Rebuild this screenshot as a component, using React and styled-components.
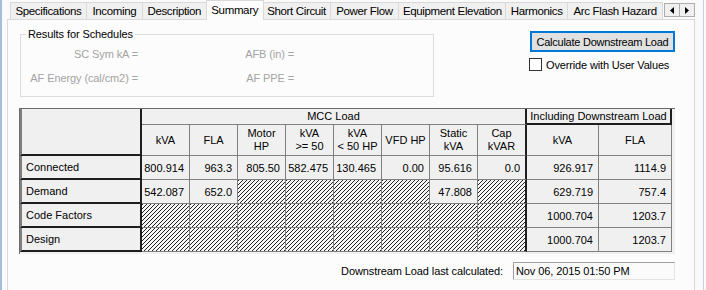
import React from 'react';
import styled, { createGlobalStyle, css } from 'styled-components';

const GlobalStyle = createGlobalStyle`
  html, body { margin: 0; padding: 0; background: #fafafa; }
  * { box-sizing: border-box; }
`;

// --- window chrome ---
const Frame = styled.div`
  width: 706px; height: 290px; display: flex; overflow: hidden;
  background: #fafafa; border-left: 2px solid #a4bdd8;
  font-family: "Liberation Sans", Arial, sans-serif; font-size: 11px; color: #000;
`;
const TabControl = styled.div`
  margin-left: 5px; width: 688px; display: flex; flex-direction: column;
`;
const TabStrip = styled.div`
  display: flex; align-items: flex-end; height: 19px; padding-left: 3px;
`;
const Tab = styled.div`
  width: ${p => p.$w}px; height: ${p => (p.$active ? 20 : 17)}px;
  margin-left: ${p => (p.$first ? 0 : -1)}px; margin-bottom: ${p => (p.$active ? -1 : 0)}px;
  border: 1px solid #d9d9d9; border-bottom: none;
  background: ${p => (p.$active ? '#fcfcfc' : '#f0f0f0')};
  position: relative; z-index: ${p => (p.$active ? 2 : 1)};
  display: flex; align-items: center; justify-content: center;
  font-size: 11.5px; letter-spacing: -0.35px; white-space: nowrap;
  padding-bottom: ${p => (p.$active ? 2 : 0)}px;
`;
const ScrollButtons = styled.div`
  display: flex; align-self: flex-start; margin-top: 3px; margin-left: 1px;
`;
const ArrowButton = styled.div`
  width: 16px; height: 14px; margin-left: ${p => (p.$second ? -1 : 0)}px;
  border: 1px solid #adadad; background: #f0f0f0;
  display: flex; align-items: center; justify-content: center;
`;
const Panel = styled.div`
  flex: 1; border: 1px solid #d9d9d9; border-bottom: none; background: #fcfcfc;
  padding-left: 11px;
`;
const RightRail = styled.div`
  flex: 1; margin-right: 2px; border-right: 1px solid #c3d1e0;
`;

// --- top section ---
const TopRow = styled.div`
  display: flex; align-items: flex-start; margin-top: 11px;
`;
const GroupBox = styled.div`
  margin: 3px 0 0 1px; width: 414px; height: 63px;
  border: 1px solid #dcdcdc;
`;
const Legend = styled.div`
  display: table; margin: -8px 0 0 5px; padding: 0 2px;
  line-height: 14px; background: #fcfcfc; letter-spacing: -0.1px;
`;
const LabelGrid = styled.div`
  display: grid; grid-template-columns: 117px 156px; grid-auto-rows: 24px; margin-top: 1px;
`;
const DimLabel = styled.div`
  text-align: right; line-height: 24px; color: #a3a3a3; letter-spacing: -0.1px; white-space: nowrap;
`;
const RightCol = styled.div`
  margin-left: 96px; display: flex; flex-direction: column;
`;
const Button = styled.div`
  width: 145px; height: 21px; border: 2px solid #0078d7; background: #e1e1e1;
  display: flex; align-items: center; justify-content: center;
  letter-spacing: -0.25px; white-space: nowrap;
`;
const CheckRow = styled.div`
  display: flex; align-items: center; margin-top: 6px; margin-left: -1px;
`;
const CheckBox = styled.div`
  width: 13px; height: 13px; border: 1px solid #333; background: #fff;
`;
const CheckLabel = styled.span`
  margin-left: 4px; letter-spacing: -0.15px; white-space: nowrap;
`;

// --- load grid ---
const Grid = styled.div`
  margin-top: 11px; width: 656px; display: grid;
  grid-template-columns: 122px repeat(7, 48px) 49px 72px 73px;
  grid-template-rows: 16px 31px repeat(4, 24px);
  border-top: 1px solid #6b6b6b; border-left: 1px solid #6b6b6b;
  background: #f0f0f0; padding-bottom: 2px;
`;
const darkEdge = '#1e1e1e';
const lineGray = '#808080';
const hatch = css`
  background: repeating-linear-gradient(135deg, #222 0px, #222 0.9px, #f6f6f6 0.9px, #f6f6f6 2.83px);
`;
const Corner = styled.div`
  grid-row: span 2; border-left: 2px solid ${lineGray};
  border-right: 2px solid ${darkEdge}; border-bottom: 2px solid ${darkEdge};
`;
const GroupHead = styled.div`
  grid-column: span ${p => p.$span};
  border-right: ${p => (p.$dark ? `2px solid ${darkEdge}` : `2px solid ${darkEdge}`)};
  border-bottom: ${p => (p.$dark ? `2px solid ${darkEdge}` : `1px solid ${lineGray}`)};
  display: flex; align-items: center; justify-content: center; line-height: 13px;
`;
const HeadCell = styled.div`
  border-right: ${p => (p.$thick ? `2px solid ${darkEdge}` : `1px solid ${lineGray}`)};
  border-bottom: 1px solid ${lineGray};
  display: flex; align-items: center; justify-content: center;
  text-align: center; line-height: 13px;
`;
const RowHead = styled.div`
  border-left: 2px solid ${lineGray};
  border-right: 2px solid ${darkEdge}; border-bottom: 2px solid ${darkEdge};
  display: flex; align-items: center; padding-left: 4px;
`;
const DataCell = styled.div`
  border-right: ${p => (p.$thick ? `2px solid ${darkEdge}` : `1px solid ${lineGray}`)};
  border-bottom: 1px solid ${lineGray};
  display: flex; align-items: center; justify-content: flex-end; padding-right: 5px;
  ${p => p.$hatched && hatch}
`;

// --- footer ---
const Footer = styled.div`
  width: 656px; margin-top: 8px; display: flex; justify-content: flex-end; align-items: center;
`;
const FooterLabel = styled.span`
  margin-right: 10px; letter-spacing: -0.1px;
`;
const TextBox = styled.div`
  width: 162px; height: 18px; padding-left: 2px;
  border: 1px solid; border-color: #a0a0a0 #e3e3e3 #e3e3e3 #a0a0a0;
  background: #fbfbfb; display: flex; align-items: center; letter-spacing: -0.1px;
`;

const tabs = [
  ['Specifications', 77], ['Incoming', 57], ['Description', 65], ['Summary', 58],
  ['Short Circuit', 68], ['Power Flow', 70], ['Equipment Elevation', 108],
  ['Harmonics', 63], ['Arc Flash Hazard', 96],
];

const columns = [
  ['kVA'], ['FLA'], ['Motor', 'HP'], ['kVA', '>= 50'], ['kVA', '< 50 HP'],
  ['VFD HP'], ['Static', 'kVA'], ['Cap', 'kVAR'], ['kVA'], ['FLA'],
];

// null = hatched
const rows = [
  ['Connected', ['800.914', '963.3', '805.50', '582.475', '130.465', '0.00', '95.616', '0.0', '926.917', '1114.9']],
  ['Demand', ['542.087', '652.0', null, null, null, null, '47.808', null, '629.719', '757.4']],
  ['Code Factors', [null, null, null, null, null, null, null, null, '1000.704', '1203.7']],
  ['Design', [null, null, null, null, null, null, null, null, '1000.704', '1203.7']],
];

const Arrow = ({ dir }) => (
  <svg width="4" height="7" viewBox="0 0 4 7">
    <polygon points={dir === 'left' ? '4,0 0,3.5 4,7' : '0,0 4,3.5 0,7'} fill="#000" />
  </svg>
);

const App = () => (
  <>
    <GlobalStyle />
    <Frame>
      <TabControl>
        <TabStrip>
          {tabs.map(([label, w], i) => (
            <Tab key={label} $w={w} $first={i === 0} $active={label === 'Summary'}>{label}</Tab>
          ))}
          <ScrollButtons>
            <ArrowButton><Arrow dir="left" /></ArrowButton>
            <ArrowButton $second><Arrow dir="right" /></ArrowButton>
          </ScrollButtons>
        </TabStrip>
        <Panel>
          <TopRow>
            <GroupBox>
              <Legend>Results for Schedules</Legend>
              <LabelGrid>
                <DimLabel>SC Sym kA =</DimLabel>
                <DimLabel>AFB (in) =</DimLabel>
                <DimLabel>AF Energy (cal/cm2) =</DimLabel>
                <DimLabel>AF PPE =</DimLabel>
              </LabelGrid>
            </GroupBox>
            <RightCol>
              <Button>Calculate Downstream Load</Button>
              <CheckRow>
                <CheckBox />
                <CheckLabel>Override with User Values</CheckLabel>
              </CheckRow>
            </RightCol>
          </TopRow>

          <Grid>
            <Corner />
            <GroupHead $span={8}>MCC Load</GroupHead>
            <GroupHead $span={2} $dark>Including Downstream Load</GroupHead>
            {columns.map((lines, i) => (
              <HeadCell key={i} $thick={i === 7}>
                {lines.map((l, j) => <React.Fragment key={j}>{j > 0 && <br />}{l}</React.Fragment>)}
              </HeadCell>
            ))}
            {rows.map(([name, vals]) => (
              <React.Fragment key={name}>
                <RowHead>{name}</RowHead>
                {vals.map((v, i) => (
                  <DataCell key={i} $thick={i === 7} $hatched={v === null}>{v}</DataCell>
                ))}
              </React.Fragment>
            ))}
          </Grid>

          <Footer>
            <FooterLabel>Downstream Load last calculated:</FooterLabel>
            <TextBox>Nov 06, 2015 01:50 PM</TextBox>
          </Footer>
        </Panel>
      </TabControl>
      <RightRail />
    </Frame>
  </>
);

export default App;
